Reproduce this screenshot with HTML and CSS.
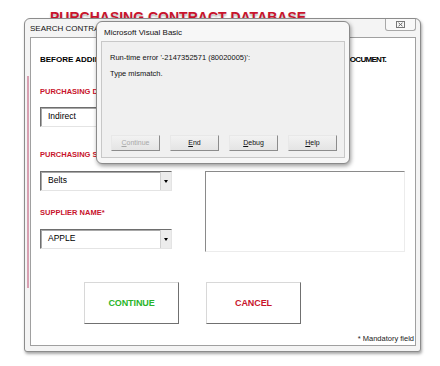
FILE: index.html
```html
<!DOCTYPE html>
<html lang="en">
<head>
    <meta charset="UTF-8">
    <title>Search Contract</title>
    <link rel="stylesheet" href="styles.css">
</head>
<body>
    <h1 class="sheet-title">PURCHASING CONTRACT DATABASE</h1>

    <div class="userform">
        <div class="userform-bar">
            <span class="userform-title">SEARCH CONTRACT</span>
            <span class="close-btn">
                <svg width="9" height="7" viewBox="0 0 9 7">
                    <rect x="0.5" y="0.5" width="8" height="6" fill="none" stroke="#777"/>
                    <path d="M2.5 1.8 L6.5 5.2 M6.5 1.8 L2.5 5.2" stroke="#666" stroke-width="1"/>
                </svg>
            </span>
        </div>
        <div class="userform-body">
            <p class="intro">
                <span class="intro-start">BEFORE ADDING A NEW CONTRACT, PLEASE SEARCH IF THE SUPPLIER HAS ANY OTHER</span>
                <span class="intro-end">DOCUMENT.</span>
            </p>

            <p class="label">PURCHASING DEPARTMENT*</p>
            <div class="textbox">Indirect</div>

            <p class="label label-gap">PURCHASING SUBCATEGORY*</p>
            <div class="field-row">
                <div class="field-col">
                    <div class="combo">
                        <span class="combo-value">Belts</span>
                        <span class="combo-arrow"></span>
                    </div>
                    <p class="label label-mid">SUPPLIER NAME*</p>
                    <div class="combo">
                        <span class="combo-value">APPLE</span>
                        <span class="combo-arrow"></span>
                    </div>
                </div>
                <div class="listbox"></div>
            </div>

            <div class="actions">
                <div class="action-btn continue">CONTINUE</div>
                <div class="action-btn cancel">CANCEL</div>
            </div>

            <p class="mandatory">* Mandatory field</p>
        </div>
    </div>

    <div class="msgbox">
        <div class="msgbox-bar">Microsoft Visual Basic</div>
        <div class="msgbox-panel">
            <p class="msg-line">Run-time error '-2147352571 (80020005)':</p>
            <p class="msg-line">Type mismatch.</p>
            <div class="msg-buttons">
                <span class="msg-btn disabled"><u>C</u>ontinue</span>
                <span class="msg-btn"><u>E</u>nd</span>
                <span class="msg-btn"><u>D</u>ebug</span>
                <span class="msg-btn"><u>H</u>elp</span>
            </div>
        </div>
    </div>
</body>
</html>
```

FILE: styles.css
```css
* {
    margin: 0;
    padding: 0;
    box-sizing: border-box;
}

body {
    font-family: "Liberation Sans", Arial, sans-serif;
    background: #ffffff;
    color: #000000;
    width: 440px;
    height: 366px;
    position: relative;
    overflow: hidden;
}

.sheet-title {
    font-size: 14px;
    line-height: 14px;
    font-weight: bold;
    color: #c8142c;
    padding: 10px 0 0 50px;
    text-shadow: 0 2px 2px rgba(0, 0, 0, 0.3);
    white-space: nowrap;
}

/* search form window */
.userform {
    position: absolute;
    left: 24px;
    top: 18px;
    width: 397px;
    height: 334px;
    background: #f4f4f4;
    border: 1px solid #8c8c8c;
    border-radius: 6px 6px 3px 3px;
    box-shadow: 1px 2px 3px rgba(0, 0, 0, 0.35);
    padding: 0 4px 5px 5px;
    display: flex;
    flex-direction: column;
}

.userform::before {
    content: "";
    position: absolute;
    left: 2px;
    top: 57px;
    width: 2px;
    height: 212px;
    background: #d8a0b2;
}

.userform-bar {
    height: 18px;
    display: flex;
    justify-content: space-between;
    align-items: flex-start;
}

.userform-title {
    font-size: 8px;
    line-height: 10px;
    padding-top: 5px;
    white-space: nowrap;
    color: #111;
}

.close-btn {
    width: 31px;
    height: 12px;
    border: 1px solid #a8a8a8;
    border-top: none;
    border-radius: 0 0 3px 3px;
    background: #f8f8f8;
    display: flex;
    align-items: center;
    justify-content: center;
}

.userform-body {
    flex: 1;
    background: #ffffff;
    border: 1px solid #a0a0a0;
    padding: 17px 0 0 9px;
    display: flex;
    flex-direction: column;
}

.intro {
    width: 346px;
    display: flex;
    font-size: 8px;
    line-height: 10px;
    font-weight: bold;
    white-space: nowrap;
}

.intro-start {
    flex: 1;
    overflow: hidden;
    margin-right: 3px;
}

.intro-end {
    letter-spacing: -0.7px;
}

.label {
    font-size: 7.5px;
    line-height: 10px;
    font-weight: bold;
    color: #c8142c;
    margin-top: 22px;
    margin-bottom: 10px;
    white-space: nowrap;
}

.label-gap {
    margin-top: 23px;
    margin-bottom: 11px;
}

.label-mid {
    margin-top: 17px;
    margin-bottom: 11px;
}

.textbox,
.combo {
    width: 132px;
    height: 20px;
    border-top: 1px solid #6e6e6e;
    border-left: 1px solid #6e6e6e;
    border-right: 1px solid #e4e4e4;
    border-bottom: 1px solid #e4e4e4;
    box-shadow: inset 1px 1px 0 #a8a8a8;
    background: #ffffff;
    font-size: 8.5px;
    line-height: 16px;
    padding-left: 7px;
}

.combo {
    display: flex;
    justify-content: space-between;
    padding-right: 0;
}

.combo-arrow {
    width: 11px;
    height: 18px;
    background: #ececec;
    border-left: 1px solid #d0d0d0;
    position: relative;
}

.combo-arrow::after {
    content: "";
    position: absolute;
    left: 3px;
    top: 8px;
    border-left: 2.5px solid transparent;
    border-right: 2.5px solid transparent;
    border-top: 3px solid #000;
}

.field-row {
    display: flex;
    gap: 33px;
    align-items: flex-start;
}

.field-col {
    display: flex;
    flex-direction: column;
}

.listbox {
    width: 200px;
    height: 81px;
    background: #ffffff;
    border-top: 1px solid #8a8a8a;
    border-left: 1px solid #8a8a8a;
    border-right: 1px solid #ececec;
    border-bottom: 1px solid #ececec;
}

.actions {
    display: flex;
    gap: 27px;
    margin: 30px 0 0 44px;
}

.action-btn {
    width: 95px;
    height: 42px;
    background: #ffffff;
    border-top: 1px solid #d8d8d8;
    border-left: 1px solid #d8d8d8;
    border-right: 1px solid #707070;
    border-bottom: 1px solid #707070;
    display: flex;
    align-items: center;
    justify-content: center;
    font-size: 9px;
    font-weight: bold;
    letter-spacing: -0.1px;
}

.continue {
    color: #2ab52a;
}

.cancel {
    color: #c8142c;
}

.mandatory {
    font-size: 7.5px;
    line-height: 10px;
    text-align: right;
    padding-right: 1px;
    margin-top: 10px;
    color: #222;
}

/* runtime error dialog */
.msgbox {
    position: absolute;
    left: 96px;
    top: 21px;
    width: 254px;
    height: 143px;
    background: #f7f7f7;
    border: 1px solid #8a8a8a;
    border-radius: 6px;
    box-shadow: 1px 2px 4px rgba(0, 0, 0, 0.4);
    padding: 0 4px 5px 4px;
    display: flex;
    flex-direction: column;
}

.msgbox-bar {
    height: 19px;
    font-size: 8px;
    line-height: 10px;
    padding: 6px 0 0 3px;
    color: #111;
}

.msgbox-panel {
    flex: 1;
    background: #f0f0f0;
    border: 1px solid #c8c8c8;
    padding: 11px 0 0 8px;
    display: flex;
    flex-direction: column;
}

.msg-line {
    font-size: 7.5px;
    line-height: 10px;
    margin-bottom: 6px;
    color: #111;
}

.msg-buttons {
    display: flex;
    gap: 10px;
    margin-top: auto;
    margin-bottom: 6px;
    margin-left: 1px;
}

.msg-btn {
    width: 49px;
    height: 16px;
    background: linear-gradient(#f2f2f2, #e4e4e4);
    border-top: 1px solid #e8e8e8;
    border-left: 1px solid #e8e8e8;
    border-right: 1px solid #8c8c8c;
    border-bottom: 1px solid #8c8c8c;
    font-size: 7px;
    line-height: 14px;
    text-align: center;
    color: #111;
}

.msg-btn.disabled {
    color: #a8a8a8;
}
```
